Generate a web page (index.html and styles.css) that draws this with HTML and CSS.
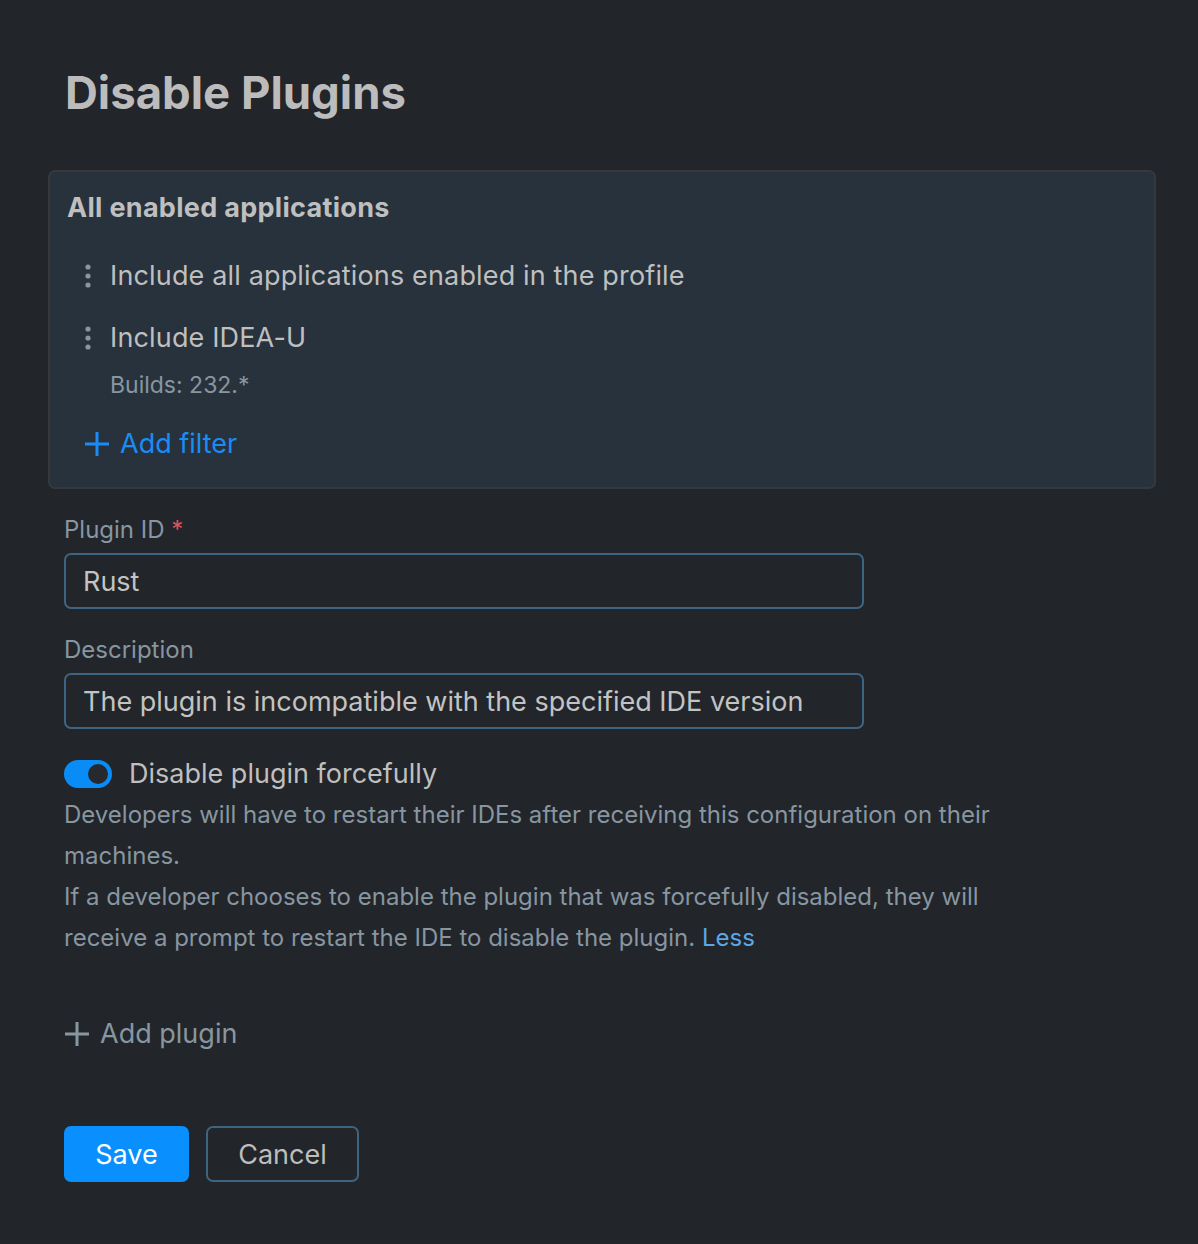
FILE: index.html
```html
<!DOCTYPE html>
<html lang="en">
<head>
    <meta charset="UTF-8">
    <meta name="viewport" content="width=device-width, initial-scale=1.0">
    <title>Disable Plugins</title>
    <link rel="stylesheet" href="styles.css">
</head>
<body>
    <div class="page">
        <h1 class="title">Disable Plugins</h1>

        <div class="filters">
            <div class="filters-title">All enabled applications</div>

            <div class="filter-row">
                <span class="drag">
                    <svg width="8" height="26" viewBox="0 0 8 26"><circle cx="4" cy="4" r="2.6"/><circle cx="4" cy="13" r="2.6"/><circle cx="4" cy="22" r="2.6"/></svg>
                </span>
                <div class="filter-text">Include all applications enabled in the profile</div>
            </div>

            <div class="filter-row">
                <span class="drag">
                    <svg width="8" height="26" viewBox="0 0 8 26"><circle cx="4" cy="4" r="2.6"/><circle cx="4" cy="13" r="2.6"/><circle cx="4" cy="22" r="2.6"/></svg>
                </span>
                <div>
                    <div class="filter-text">Include IDEA-U</div>
                    <div class="filter-sub">Builds: 232.*</div>
                </div>
            </div>

            <a class="add-filter" href="#">
                <svg width="26" height="26" viewBox="0 0 26 26"><path d="M13 1v24M1 13h24" stroke="currentColor" stroke-width="3" fill="none"/></svg>
                Add filter
            </a>
        </div>

        <div class="field">
            <label class="field-label" for="plugin-id">Plugin ID <span class="req">*</span></label>
            <input class="field-input" id="plugin-id" type="text" value="Rust">
        </div>

        <div class="field">
            <label class="field-label" for="plugin-desc">Description</label>
            <input class="field-input" id="plugin-desc" type="text" value="The plugin is incompatible with the specified IDE version">
        </div>

        <div class="toggle-row">
            <span class="toggle"><span class="knob"></span></span>
            <span class="toggle-label">Disable plugin forcefully</span>
        </div>
        <p class="hint">
            Developers will have to restart their IDEs after receiving this configuration on their machines.<br>
            If a developer chooses to enable the plugin that was forcefully disabled, they will receive a prompt to restart the IDE to disable the plugin. <a class="less" href="#">Less</a>
        </p>

        <a class="add-plugin" href="#">
            <svg width="26" height="26" viewBox="0 0 26 26"><path d="M13 1v24M1 13h24" stroke="currentColor" stroke-width="3" fill="none"/></svg>
            Add plugin
        </a>

        <div class="actions">
            <button class="btn btn-primary">Save</button>
            <button class="btn btn-secondary">Cancel</button>
        </div>
    </div>
</body>
</html>
```

FILE: styles.css
```css
body {
    margin: 0;
    background-color: #222529;
    font-family: Inter, "Noto Sans", sans-serif;
    color: #bfbfbf;
}

.page {
    padding: 66px 42px 60px 48px;
}

.title {
    margin: 0 0 50px 17px;
    font-size: 45.5px;
    font-weight: 700;
    color: #bcbcbc;
    line-height: 54px;
}

.filters {
    background-color: #27323c;
    border: 2px solid #33393e;
    border-radius: 7px;
    padding: 18px 16px 25px 17px;
}

.filters-title {
    font-size: 27px;
    font-weight: 700;
    letter-spacing: 0.3px;
    line-height: 36px;
    margin-bottom: 32px;
}

.filter-row {
    display: flex;
    align-items: flex-start;
    gap: 18px;
    padding-left: 17px;
    margin-bottom: 26px;
}

.drag {
    display: flex;
    padding-top: 5px;
    fill: #8796a1;
}

.filter-text {
    font-size: 27px;
    letter-spacing: 0.15px;
    line-height: 36px;
}

.filter-sub {
    font-size: 23px;
    color: #8796a1;
    line-height: 30px;
    margin-top: 14px;
}

.add-filter {
    display: inline-flex;
    align-items: center;
    gap: 10px;
    margin-left: 17px;
    font-size: 27px;
    line-height: 36px;
    color: #1b8cf5;
    text-decoration: none;
}

.field {
    margin: 26px 0 0 16px;
    width: 800px;
}

.field-label {
    display: block;
    font-size: 24px;
    line-height: 30px;
    color: #8796a1;
    margin-bottom: 8px;
}

.req {
    color: #e0535a;
}

.field-input {
    box-sizing: border-box;
    width: 100%;
    height: 56px;
    padding: 0 17px;
    background-color: #222529;
    border: 2px solid #3d6482;
    border-radius: 7px;
    font-family: inherit;
    font-size: 27px;
    color: #c3c3c3;
    outline: none;
}

.toggle-row {
    display: flex;
    align-items: center;
    gap: 17px;
    margin: 27px 0 0 16px;
}

.toggle {
    display: flex;
    align-items: center;
    justify-content: flex-end;
    box-sizing: border-box;
    width: 48px;
    height: 28px;
    padding: 0 4px;
    border-radius: 14px;
    background-color: #0a8cf7;
}

.knob {
    width: 20px;
    height: 20px;
    border-radius: 50%;
    background-color: #26292d;
}

.toggle-label {
    font-size: 27px;
    line-height: 36px;
}

.hint {
    margin: 2px 0 0 16px;
    max-width: 940px;
    font-size: 24px;
    line-height: 41px;
    color: #8796a1;
}

.less {
    color: #5aa8e8;
    text-decoration: none;
}

.add-plugin {
    display: inline-flex;
    align-items: center;
    gap: 10px;
    margin: 58px 0 0 16px;
    font-size: 27px;
    line-height: 36px;
    color: #8796a1;
    text-decoration: none;
}

.actions {
    display: flex;
    gap: 17px;
    margin: 74px 0 0 16px;
}

.btn {
    height: 56px;
    border-radius: 7px;
    font-family: inherit;
    font-size: 27px;
    cursor: pointer;
}

.btn-primary {
    width: 125px;
    border: none;
    background-color: #0a8fff;
    color: #ffffff;
}

.btn-secondary {
    width: 153px;
    border: 2px solid #3d6482;
    background-color: transparent;
    color: #bdbdbd;
}
```
